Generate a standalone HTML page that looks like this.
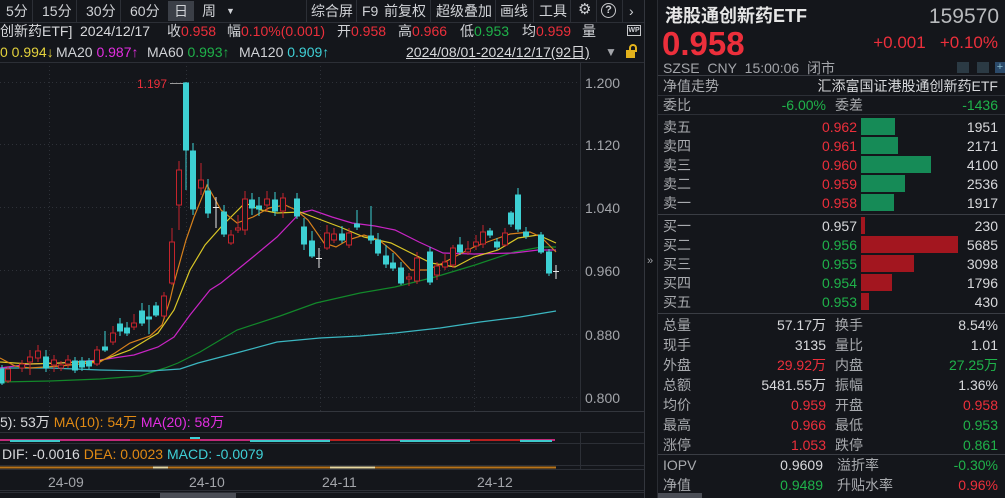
<!DOCTYPE html>
<html><head><meta charset="utf-8"><style>
*{margin:0;padding:0;box-sizing:border-box}
body{width:1005px;height:498px;background:#14161b;overflow:hidden;position:relative;font-family:"Liberation Sans","Noto Sans CJK SC",sans-serif;font-size:14px;color:#d0d2d6}
.a{position:absolute;white-space:nowrap;line-height:16px}
.r{color:#ec2f3b}.g{color:#1fb24a}.w{color:#d8d9dc}.y{color:#e4d23c}.m{color:#e22ee0}.c{color:#3fd0d6}.gy{color:#a3a5aa}.o{color:#e08a14}
.hl{position:absolute;height:1px;background:#2c2f36}
.vl{position:absolute;width:1px;background:#2c2f36}
.rt{position:absolute;text-align:right;white-space:nowrap;line-height:16px}
.lab{position:absolute;left:663px;color:#a8aaae;font-size:14px;line-height:16px}
.bar{position:absolute;left:861px;height:17px}
</style></head><body>

<!-- toolbar -->
<div class="hl" style="left:0;top:22px;width:645px"></div>
<div class="a" style="left:6px;top:3px">5分</div>
<div class="vl" style="left:32px;top:0;height:22px"></div>
<div class="a" style="left:42px;top:3px">15分</div>
<div class="vl" style="left:76px;top:0;height:22px"></div>
<div class="a" style="left:86px;top:3px">30分</div>
<div class="vl" style="left:120px;top:0;height:22px"></div>
<div class="a" style="left:130px;top:3px">60分</div>
<div style="position:absolute;left:168px;top:1px;width:26px;height:20px;background:#3b3f47"></div>
<div class="a" style="left:174px;top:3px">日</div>
<div class="a" style="left:202px;top:3px">周</div>
<div class="a" style="left:226px;top:3px;font-size:9px">▼</div>
<div class="vl" style="left:306px;top:0;height:22px"></div>
<div class="a" style="left:311px;top:3px">综合屏</div>
<div class="vl" style="left:356px;top:0;height:22px"></div>
<div class="a" style="left:362px;top:3px">F9</div>
<div class="a" style="left:384px;top:3px">前复权</div>
<div class="vl" style="left:430px;top:0;height:22px"></div>
<div class="a" style="left:436px;top:3px">超级叠加</div>
<div class="vl" style="left:495px;top:0;height:22px"></div>
<div class="a" style="left:500px;top:3px">画线</div>
<div class="vl" style="left:533px;top:0;height:22px"></div>
<div class="a" style="left:539px;top:3px">工具</div>
<div class="vl" style="left:570px;top:0;height:22px"></div>
<div class="a" style="left:578px;top:2px;font-size:15px">⚙</div>
<div class="vl" style="left:596px;top:0;height:22px"></div>
<div style="position:absolute;left:601px;top:3px;width:15px;height:15px;border:1.5px solid #c8c9cc;border-radius:50%;font-size:11px;text-align:center;line-height:12px;font-weight:bold">?</div>
<div class="vl" style="left:622px;top:0;height:22px"></div>
<div class="a" style="left:629px;top:3px">›</div>

<!-- info row -->
<div class="a w" style="left:0;top:23px">创新药ETF]</div>
<div class="a w" style="left:80px;top:23px">2024/12/17</div>
<div class="a" style="left:167px;top:23px">收<span class="r">0.958</span></div>
<div class="a" style="left:227px;top:23px">幅<span class="r">0.10%(0.001)</span></div>
<div class="a" style="left:337px;top:23px">开<span class="r">0.958</span></div>
<div class="a" style="left:398px;top:23px">高<span class="r">0.966</span></div>
<div class="a" style="left:460px;top:23px">低<span class="g">0.953</span></div>
<div class="a" style="left:522px;top:23px">均<span class="r">0.959</span></div>
<div class="a" style="left:582px;top:23px">量</div>
<div style="position:absolute;left:627px;top:25px;width:14px;height:11px;border:1px solid #c8c9cc;font-size:7px;line-height:9px;text-align:center;font-weight:bold">WP</div>
<!-- MA row -->
<div class="a y" style="left:0;top:44px">0 0.994↓</div>
<div class="a" style="left:56px;top:44px">MA20 <span class="m">0.987↑</span></div>
<div class="a" style="left:147px;top:44px">MA60 <span class="g">0.993↑</span></div>
<div class="a" style="left:239px;top:44px">MA120 <span class="c">0.909↑</span></div>
<div class="a w" style="left:406px;top:44px;text-decoration:underline">2024/08/01-2024/12/17(92日)</div>
<div class="a gy" style="left:605px;top:44px;font-size:12px">▼</div>
<div style="position:absolute;left:626px;top:50px;width:9px;height:8px;background:#e3b21c"></div>
<div style="position:absolute;left:629px;top:44px;width:8px;height:8px;border:2px solid #e3b21c;border-bottom:none;border-radius:4px 4px 0 0"></div>
<div class="hl" style="left:0;top:62px;width:645px"></div>

<!-- frame lines -->
<div class="vl" style="left:580px;top:62px;height:350px"></div>
<div class="vl" style="left:644px;top:0;height:498px;background:#33363d"></div>
<div style="position:absolute;left:645px;top:0;width:12px;height:498px;background:#111317"></div>
<div class="vl" style="left:657px;top:0;height:498px;background:#2a2d33"></div>
<div class="a gy" style="left:647px;top:253px;font-size:11px">»</div>

<!-- price axis -->
<div class="a gy" style="left:585px;top:75px">1.200</div>
<div class="a gy" style="left:585px;top:137px">1.120</div>
<div class="a gy" style="left:585px;top:200px">1.040</div>
<div class="a gy" style="left:585px;top:263px">0.960</div>
<div class="a gy" style="left:585px;top:327px">0.880</div>
<div class="a gy" style="left:585px;top:390px">0.800</div>

<svg style="position:absolute;left:0;top:0" width="645" height="498">
<g stroke="#2e3138" stroke-dasharray="1,3" stroke-width="1">
<line x1="0" y1="82.5" x2="580" y2="82.5"/><line x1="0" y1="144.5" x2="580" y2="144.5"/><line x1="0" y1="207.5" x2="580" y2="207.5"/><line x1="0" y1="270.5" x2="580" y2="270.5"/><line x1="0" y1="334.5" x2="580" y2="334.5"/><line x1="0" y1="397.5" x2="580" y2="397.5"/>
<line x1="49.5" y1="62" x2="49.5" y2="411"/><line x1="186.5" y1="62" x2="186.5" y2="411"/><line x1="320.5" y1="62" x2="320.5" y2="411"/><line x1="474.5" y1="62" x2="474.5" y2="411"/>
</g>
<g fill="none" stroke-width="1.2">
<polyline stroke="#12882a" points="0,382 50,381 100,379 140,376 165,368 178,363 200,352 237,330 280,316 316,303 360,293 395,287 435,277 475,265 514,252 541,247 556,247"/>
<polyline stroke="#3bb6c0" points="0,368 50,368 100,370 150,371 180,369 198,363 240,352 277,342 320,338 360,336 395,333 440,328 480,322 520,317 556,311"/>
<polyline stroke="#c824c4" points="0,368 30,364 60,363 100,360 134,355 158,347 174,337 190,315 210,290 221,283 253,257 277,237 300,213 312,210 332,217 352,223 375,226 395,230 419,242 443,253 474,254 514,253 538,250 556,250"/>
<polyline stroke="#d9c626" points="0,362 30,364 60,363 100,361 130,350 158,333 174,310 190,270 205,245 221,227 245,203 261,210 277,213 300,212 316,218 340,227 364,237 391,243 411,253 431,263 455,267 474,257 498,250 518,238 538,235 556,243"/>
<polyline stroke="#d6801c" points="0,358 15,366 30,368 60,366 100,362 115,353 130,343 150,336 162,325 170,300 174,283 186,240 194,217 207,185 221,210 237,223 253,217 269,208 285,205 296,210 308,220 324,243 336,247 348,240 364,235 379,240 395,253 411,270 427,270 443,263 458,255 474,247 490,241 510,234 530,232 541,237 556,252"/>
</g>
<g fill="#3dd0d3" stroke="#3dd0d3" stroke-width="1">
<line x1="2" y1="365" x2="2" y2="385"/><rect x="0" y="369" width="4" height="14"/>
<line x1="46" y1="350" x2="46" y2="372"/><rect x="43.5" y="357" width="5" height="11"/>
<line x1="75" y1="357" x2="75" y2="373"/><rect x="72.5" y="361" width="5" height="9"/>
<line x1="82" y1="357" x2="82" y2="371"/><rect x="79.5" y="361" width="5" height="6"/>
<line x1="89" y1="358" x2="89" y2="369"/><rect x="86.5" y="361" width="5" height="5"/>
<line x1="105" y1="331" x2="105" y2="352"/><rect x="102.5" y="347" width="5" height="3"/>
<line x1="120" y1="318" x2="120" y2="336"/><rect x="117.5" y="324" width="5" height="7"/>
<line x1="127" y1="322" x2="127" y2="336"/><rect x="124.5" y="328" width="5" height="5"/>
<line x1="142" y1="303" x2="142" y2="326"/><rect x="139.5" y="311" width="5" height="12"/>
<line x1="149" y1="305" x2="149" y2="334"/><rect x="146.5" y="317" width="5" height="2"/>
<line x1="156" y1="302" x2="156" y2="317"/><rect x="153.5" y="306" width="5" height="9"/>
<line x1="186" y1="82" x2="186" y2="190"/><rect x="183.5" y="83" width="5" height="67"/>
<line x1="193" y1="143" x2="193" y2="215"/><rect x="190.5" y="151" width="5" height="58"/>
<line x1="208" y1="179" x2="208" y2="218"/><rect x="205.5" y="191" width="5" height="22"/>
<line x1="224" y1="205" x2="224" y2="237"/><rect x="221.5" y="212" width="5" height="22"/>
<line x1="252" y1="193" x2="252" y2="215"/><rect x="249.5" y="200" width="5" height="8"/>
<line x1="259" y1="197" x2="259" y2="216"/><rect x="256.5" y="206" width="5" height="3"/>
<line x1="275" y1="192" x2="275" y2="216"/><rect x="272.5" y="200" width="5" height="11"/>
<line x1="297" y1="193" x2="297" y2="219"/><rect x="294.5" y="199" width="5" height="17"/>
<line x1="304" y1="218" x2="304" y2="250"/><rect x="301.5" y="227" width="5" height="17"/>
<line x1="312" y1="231" x2="312" y2="258"/><rect x="309.5" y="241" width="5" height="15"/>
<line x1="342" y1="226" x2="342" y2="243"/><rect x="339.5" y="234" width="5" height="6"/>
<line x1="357" y1="210" x2="357" y2="230"/><rect x="354.5" y="224" width="5" height="3"/>
<line x1="371" y1="206" x2="371" y2="244"/><rect x="368.5" y="236" width="5" height="4"/>
<line x1="378" y1="233" x2="378" y2="256"/><rect x="375.5" y="240" width="5" height="13"/>
<line x1="386" y1="245" x2="386" y2="268"/><rect x="383.5" y="256" width="5" height="8"/>
<line x1="393" y1="253" x2="393" y2="271"/><rect x="390.5" y="263" width="5" height="5"/>
<line x1="401" y1="262" x2="401" y2="285"/><rect x="398.5" y="268" width="5" height="15"/>
<line x1="430" y1="247" x2="430" y2="285"/><rect x="427.5" y="252" width="5" height="30"/>
<line x1="460" y1="237" x2="460" y2="255"/><rect x="457.5" y="245" width="5" height="7"/>
<line x1="490" y1="228" x2="490" y2="238"/><rect x="487.5" y="231" width="5" height="4"/>
<line x1="497" y1="238" x2="497" y2="250"/><rect x="494.5" y="242" width="5" height="5"/>
<line x1="511" y1="211" x2="511" y2="227"/><rect x="508.5" y="213" width="5" height="11"/>
<line x1="518" y1="188" x2="518" y2="232"/><rect x="515.5" y="195" width="5" height="34"/>
<line x1="526" y1="227" x2="526" y2="239"/><rect x="523.5" y="232" width="5" height="4"/>
<line x1="541" y1="232" x2="541" y2="254"/><rect x="538.5" y="235" width="5" height="17"/>
<line x1="549" y1="249" x2="549" y2="276"/><rect x="546.5" y="252" width="5" height="21"/>
</g>
<g fill="#14161b" stroke="#c4242c" stroke-width="1">
<line x1="8" y1="366" x2="8" y2="383"/><rect x="5.5" y="369" width="5" height="12"/>
<line x1="22" y1="360" x2="22" y2="372"/><rect x="19.5" y="364" width="5" height="4"/>
<line x1="30" y1="350" x2="30" y2="375"/><rect x="27.5" y="357" width="5" height="5"/>
<line x1="38" y1="345" x2="38" y2="362"/><rect x="35.5" y="351" width="5" height="7"/>
<line x1="54" y1="355" x2="54" y2="372"/><rect x="51.5" y="360" width="5" height="5"/>
<line x1="61" y1="361" x2="61" y2="371"/><rect x="58.5" y="365" width="5" height="3"/>
<line x1="68" y1="355" x2="68" y2="368"/><rect x="65.5" y="360" width="5" height="4"/>
<line x1="97" y1="346" x2="97" y2="366"/><rect x="94.5" y="350" width="5" height="14"/>
<line x1="113" y1="326" x2="113" y2="345"/><rect x="110.5" y="333" width="5" height="9"/>
<line x1="134" y1="314" x2="134" y2="330"/><rect x="131.5" y="323" width="5" height="4"/>
<line x1="164" y1="292" x2="164" y2="318"/><rect x="161.5" y="296" width="5" height="20"/>
<line x1="172" y1="228" x2="172" y2="285"/><rect x="169.5" y="242" width="5" height="41"/>
<line x1="179" y1="161" x2="179" y2="230"/><rect x="176.5" y="170" width="5" height="35"/>
<line x1="201" y1="163" x2="201" y2="195"/><rect x="198.5" y="180" width="5" height="8"/>
<line x1="231" y1="230" x2="231" y2="245"/><rect x="228.5" y="235" width="5" height="8"/>
<line x1="238" y1="215" x2="238" y2="233"/><rect x="235.5" y="228" width="5" height="2"/>
<line x1="245" y1="191" x2="245" y2="235"/><rect x="242.5" y="199" width="5" height="31"/>
<line x1="267" y1="191" x2="267" y2="212"/><rect x="264.5" y="199" width="5" height="6"/>
<line x1="283" y1="193" x2="283" y2="218"/><rect x="280.5" y="198" width="5" height="13"/>
<line x1="327" y1="225" x2="327" y2="250"/><rect x="324.5" y="233" width="5" height="15"/>
<line x1="334" y1="228" x2="334" y2="243"/><rect x="331.5" y="234" width="5" height="6"/>
<line x1="349" y1="228" x2="349" y2="248"/><rect x="346.5" y="233" width="5" height="12"/>
<line x1="409" y1="273" x2="409" y2="286"/><rect x="406.5" y="277" width="5" height="2"/>
<line x1="417" y1="252" x2="417" y2="284"/><rect x="414.5" y="258" width="5" height="23"/>
<line x1="437" y1="262" x2="437" y2="280"/><rect x="434.5" y="266" width="5" height="9"/>
<line x1="445" y1="254" x2="445" y2="270"/><rect x="442.5" y="262" width="5" height="5"/>
<line x1="453" y1="245" x2="453" y2="268"/><rect x="450.5" y="248" width="5" height="17"/>
<line x1="468" y1="241" x2="468" y2="255"/><rect x="465.5" y="249" width="5" height="3"/>
<line x1="476" y1="235" x2="476" y2="250"/><rect x="473.5" y="242" width="5" height="4"/>
<line x1="483" y1="225" x2="483" y2="248"/><rect x="480.5" y="232" width="5" height="12"/>
<line x1="505" y1="228" x2="505" y2="247"/><rect x="502.5" y="233" width="5" height="12"/>
</g>
<g stroke="#e8e8e8" stroke-width="1">
<line x1="216" y1="197" x2="216" y2="228"/><line x1="213" y1="207.5" x2="219" y2="207.5"/>
<line x1="319" y1="248" x2="319" y2="268"/><line x1="316" y1="258.5" x2="322" y2="258.5"/>
<line x1="556" y1="265" x2="556" y2="279"/><line x1="553" y1="271.5" x2="559" y2="271.5"/>
</g>
<text x="137" y="88" fill="#ec2f3b" font-size="12" font-family="Liberation Sans">1.197</text>
<line x1="170" y1="83.5" x2="183" y2="83.5" stroke="#9a9a9a"/>
<line x1="0" y1="411.5" x2="644" y2="411.5" stroke="#33363d"/>
<line x1="0" y1="432.5" x2="644" y2="432.5" stroke="#2c2f36"/>
<line x1="0" y1="443.5" x2="644" y2="443.5" stroke="#2c2f36"/>
<line x1="0" y1="465.5" x2="644" y2="465.5" stroke="#2c2f36"/>
<line x1="0" y1="469.5" x2="644" y2="469.5" stroke="#2c2f36"/>
<line x1="0" y1="490.5" x2="644" y2="490.5" stroke="#2c2f36"/>
<g stroke-width="2">
<line x1="0" y1="440" x2="555" y2="440" stroke="#c02a7a"/>
<line x1="10" y1="441" x2="60" y2="441" stroke="#3fc8cc"/><line x1="130" y1="440" x2="200" y2="440" stroke="#b82020"/>
<line x1="190" y1="438" x2="200" y2="438" stroke="#3fd0d6"/><line x1="250" y1="441" x2="330" y2="441" stroke="#3fc8cc"/>
<line x1="330" y1="440" x2="380" y2="440" stroke="#b82020"/><line x1="400" y1="441" x2="470" y2="441" stroke="#3fc8cc"/>
<line x1="470" y1="440" x2="520" y2="440" stroke="#b82020"/><line x1="520" y1="441" x2="552" y2="441" stroke="#3fc8cc"/>
</g>
<line x1="0" y1="467.5" x2="556" y2="467.5" stroke="#b8741a" stroke-width="2"/>
<line x1="153" y1="467.5" x2="168" y2="467.5" stroke="#e8d8a0" stroke-width="2"/>
<line x1="330" y1="467.5" x2="375" y2="467.5" stroke="#e8d8a0" stroke-width="2"/>
<line x1="580.5" y1="432" x2="580.5" y2="470" stroke="#2c2f36"/>
</svg>
<div class="a w" style="left:0;top:414px">5): 53万 <span class="o">MA(10): 54万</span> <span class="m">MA(20): 58万</span></div>
<div class="a w" style="left:2px;top:446px">DIF: -0.0016 <span class="o">DEA: 0.0023</span> <span class="c">MACD: -0.0079</span></div>
<div class="a gy" style="left:48px;top:474px">24-09</div>
<div class="a gy" style="left:189px;top:474px">24-10</div>
<div class="a gy" style="left:322px;top:474px">24-11</div>
<div class="a gy" style="left:477px;top:474px">24-12</div>
<div style="position:absolute;left:160px;top:492px;width:76px;height:6px;background:#4a4d55"></div>
<div style="position:absolute;left:0;top:492px;width:644px;height:6px;border-top:1px solid #2c2f36"></div>

<!-- right panel -->
<div class="a" style="left:665px;top:6px;font-size:18px;line-height:20px;font-weight:bold;color:#e6e6e6">港股通创新药ETF</div>
<div class="rt" style="right:6px;top:5px;font-size:21px;line-height:24px;color:#b8babd">159570</div>
<div class="a r" style="left:662px;top:27px;font-size:33px;line-height:34px;font-weight:bold">0.958</div>
<div class="rt r" style="right:7px;top:33px;font-size:17px;line-height:20px">+0.001&nbsp;&nbsp;&nbsp;+0.10%</div>
<div class="a gy" style="left:663px;top:60px">SZSE&nbsp; CNY&nbsp; 15:00:06&nbsp; 闭市</div>
<div style="position:absolute;left:957px;top:62px;width:12px;height:11px;background:#2b3a44"></div>
<div style="position:absolute;left:977px;top:62px;width:12px;height:11px;background:#2b3a44"></div>
<div style="position:absolute;left:995px;top:62px;width:10px;height:11px;background:#2b4a6a;color:#8bc;font-size:11px;line-height:10px;text-align:center">+</div>
<div class="hl" style="left:658px;top:75px;width:347px;background:#3a3d44"></div>
<div class="lab" style="top:78px">净值走势</div>
<div class="rt w" style="right:7px;top:78px;font-size:14px">汇添富国证港股通创新药ETF</div>
<div class="hl" style="left:658px;top:95px;width:347px"></div>
<div class="lab" style="top:97px">委比</div>
<div class="rt g" style="right:179px;top:97px;font-size:14px">-6.00%</div>
<div class="lab" style="left:835px;top:97px">委差</div>
<div class="rt g" style="right:7px;top:97px;font-size:14px">-1436</div>
<div class="hl" style="left:658px;top:114px;width:347px"></div>

<div class="bar" style="top:118px;width:34px;background:#168b57"></div>
<div class="bar" style="top:137px;width:37px;background:#168b57"></div>
<div class="bar" style="top:156px;width:70px;background:#168b57"></div>
<div class="bar" style="top:175px;width:44px;background:#168b57"></div>
<div class="bar" style="top:194px;width:33px;background:#168b57"></div>
<div class="bar" style="top:217px;width:4px;background:#a3161f"></div>
<div class="bar" style="top:236px;width:97px;background:#a3161f"></div>
<div class="bar" style="top:255px;width:53px;background:#a3161f"></div>
<div class="bar" style="top:274px;width:31px;background:#a3161f"></div>
<div class="bar" style="top:293px;width:8px;background:#a3161f"></div>

<div class="lab" style="top:119px">卖五</div><div class="rt r" style="right:148px;top:119px">0.962</div><div class="rt w" style="right:7px;top:119px">1951</div>
<div class="lab" style="top:138px">卖四</div><div class="rt r" style="right:148px;top:138px">0.961</div><div class="rt w" style="right:7px;top:138px">2171</div>
<div class="lab" style="top:157px">卖三</div><div class="rt r" style="right:148px;top:157px">0.960</div><div class="rt w" style="right:7px;top:157px">4100</div>
<div class="lab" style="top:176px">卖二</div><div class="rt r" style="right:148px;top:176px">0.959</div><div class="rt w" style="right:7px;top:176px">2536</div>
<div class="lab" style="top:195px">卖一</div><div class="rt r" style="right:148px;top:195px">0.958</div><div class="rt w" style="right:7px;top:195px">1917</div>
<div class="hl" style="left:658px;top:214px;width:347px;background:#3a3d44"></div>
<div class="lab" style="top:218px">买一</div><div class="rt w" style="right:148px;top:218px">0.957</div><div class="rt w" style="right:7px;top:218px">230</div>
<div class="lab" style="top:237px">买二</div><div class="rt g" style="right:148px;top:237px">0.956</div><div class="rt w" style="right:7px;top:237px">5685</div>
<div class="lab" style="top:256px">买三</div><div class="rt g" style="right:148px;top:256px">0.955</div><div class="rt w" style="right:7px;top:256px">3098</div>
<div class="lab" style="top:275px">买四</div><div class="rt g" style="right:148px;top:275px">0.954</div><div class="rt w" style="right:7px;top:275px">1796</div>
<div class="lab" style="top:294px">买五</div><div class="rt g" style="right:148px;top:294px">0.953</div><div class="rt w" style="right:7px;top:294px">430</div>
<div class="hl" style="left:658px;top:313px;width:347px;background:#3a3d44"></div>

<div class="lab" style="top:317px">总量</div><div class="rt w" style="right:179px;top:317px">57.17万</div><div class="lab" style="left:835px;top:317px">换手</div><div class="rt w" style="right:7px;top:317px">8.54%</div>
<div class="lab" style="top:337px">现手</div><div class="rt w" style="right:179px;top:337px">3135</div><div class="lab" style="left:835px;top:337px">量比</div><div class="rt w" style="right:7px;top:337px">1.01</div>
<div class="lab" style="top:357px">外盘</div><div class="rt r" style="right:179px;top:357px">29.92万</div><div class="lab" style="left:835px;top:357px">内盘</div><div class="rt g" style="right:7px;top:357px">27.25万</div>
<div class="lab" style="top:377px">总额</div><div class="rt w" style="right:179px;top:377px">5481.55万</div><div class="lab" style="left:835px;top:377px">振幅</div><div class="rt w" style="right:7px;top:377px">1.36%</div>
<div class="lab" style="top:397px">均价</div><div class="rt r" style="right:179px;top:397px">0.959</div><div class="lab" style="left:835px;top:397px">开盘</div><div class="rt r" style="right:7px;top:397px">0.958</div>
<div class="lab" style="top:417px">最高</div><div class="rt r" style="right:179px;top:417px">0.966</div><div class="lab" style="left:835px;top:417px">最低</div><div class="rt g" style="right:7px;top:417px">0.953</div>
<div class="lab" style="top:437px">涨停</div><div class="rt r" style="right:179px;top:437px">1.053</div><div class="lab" style="left:835px;top:437px">跌停</div><div class="rt g" style="right:7px;top:437px">0.861</div>
<div class="hl" style="left:658px;top:454px;width:347px;background:#3a3d44"></div>
<div class="lab" style="top:457px">IOPV</div><div class="rt w" style="right:182px;top:457px">0.9609</div><div class="lab" style="left:837px;top:457px">溢折率</div><div class="rt g" style="right:7px;top:457px">-0.30%</div>
<div class="lab" style="top:477px">净值</div><div class="rt g" style="right:182px;top:477px">0.9489</div><div class="lab" style="left:837px;top:477px">升贴水率</div><div class="rt r" style="right:7px;top:477px">0.96%</div>
<div style="position:absolute;left:658px;top:493px;width:44px;height:5px;background:#4a4d55"></div>
</body></html>
